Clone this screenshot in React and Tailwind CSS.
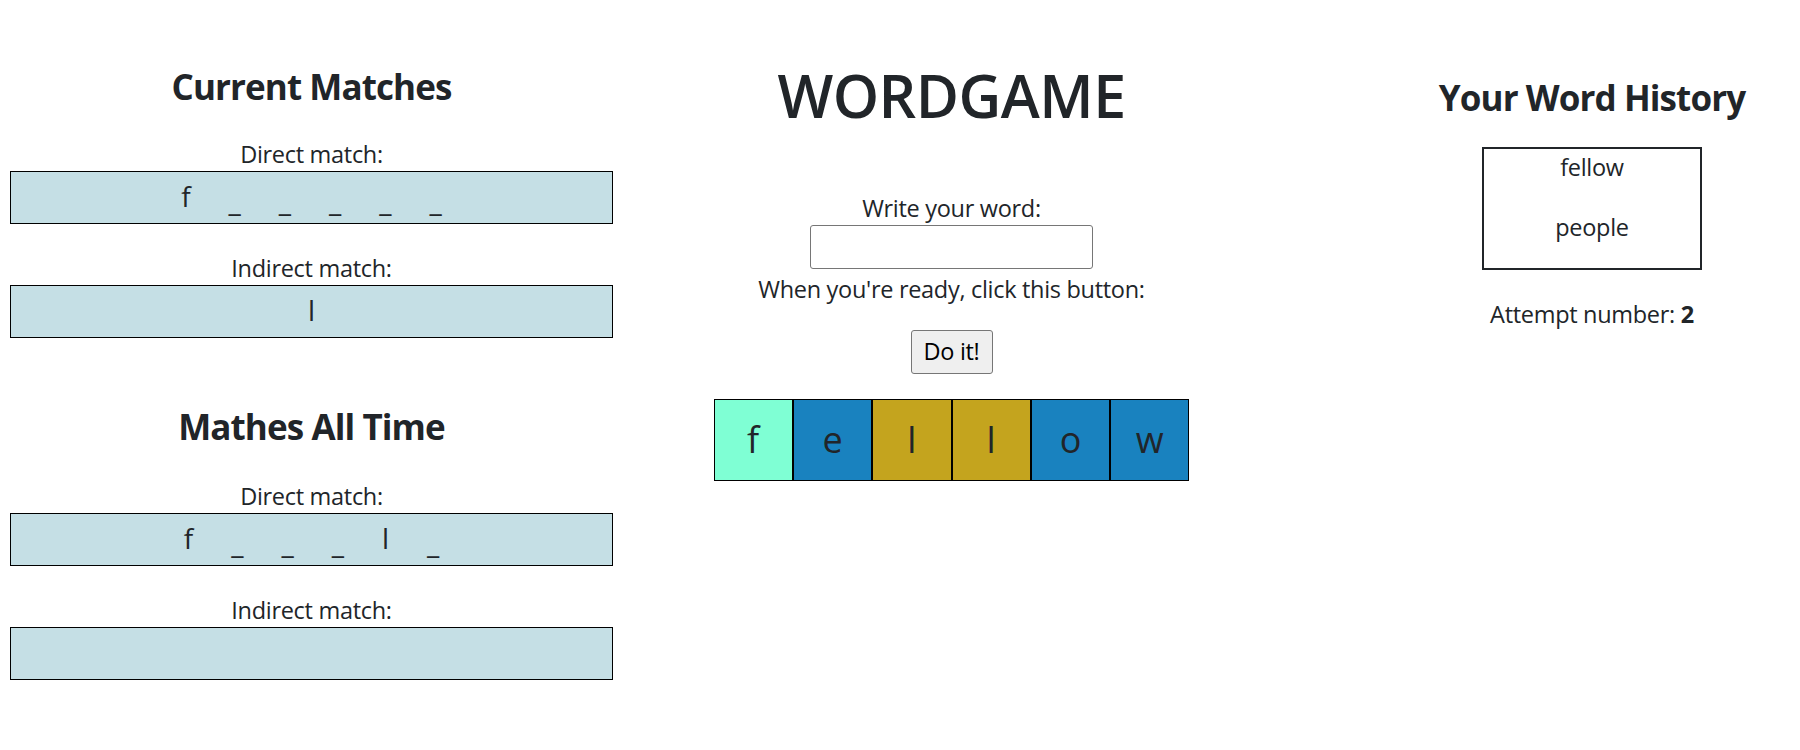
import React from "react";

const font = { fontFamily: '"Open Sans", "Noto Sans", sans-serif' };

function MatchBox({ chars }) {
  return (
    <div className="h-[53px] w-full border border-black bg-[#c5dfe5] flex items-center justify-center text-[28px] leading-none text-[#212529]">
      {chars.map((c, i) => (
        <span key={i} className={c === "_" ? "mx-[19px] relative top-[3px]" : "mx-[19px] relative top-[-2px]"}>
          {c}
        </span>
      ))}
    </div>
  );
}

function Label({ children, className = "" }) {
  return (
    <div className={"text-[23.5px] leading-[34px] tracking-[-0.3px] text-center text-[#212529] whitespace-nowrap " + className}>
      {children}
    </div>
  );
}

function Tile({ letter, color }) {
  return (
    <div className={"w-[79.33px] h-[82px] border border-black flex items-center justify-center text-[36px] text-[#212529] " + color}>
      {letter}
    </div>
  );
}

const h2 = "text-[35px] leading-[44px] font-bold tracking-[-0.9px] text-center whitespace-nowrap";

export default function App() {
  return (
    <div className="w-[1800px] h-[750px] bg-white flex text-[#212529]" style={font}>
      {/* Left column */}
      <div className="w-[623px] px-[10px] pt-[65px] flex flex-col">
        <h2 className={h2}>Current Matches</h2>
        <Label className="mt-[28px]">Direct match:</Label>
        <MatchBox chars={["f", "_", "_", "_", "_", "_"]} />
        <Label className="mt-[27px]">Indirect match:</Label>
        <MatchBox chars={["l"]} />
        <h2 className={"mt-[67px] " + h2}>Mathes All Time</h2>
        <Label className="mt-[30px]">Direct match:</Label>
        <MatchBox chars={["f", "_", "_", "_", "l", "_"]} />
        <Label className="mt-[27px]">Indirect match:</Label>
        <MatchBox chars={[]} />
      </div>

      {/* Middle column */}
      <div className="w-[657px] pt-[60px] flex flex-col items-center">
        <h1 className="text-[59px] leading-[70px] font-semibold tracking-[-0.5px]">WORDGAME</h1>
        <Label className="mt-[61px]">Write your word:</Label>
        <input
          type="text"
          className="w-[283px] h-[44px] border border-[#767676] rounded-[3px] bg-white outline-none px-2 text-[23px]"
        />
        <Label className="mt-[3px]">When you're ready, click this button:</Label>
        <button className="mt-[24px] w-[82px] h-[44px] bg-[#efefef] border border-[#767676] rounded-[3px] text-[23.5px] tracking-[-0.3px] text-black leading-none">
          Do it!
        </button>
        <div className="mt-[25px] flex">
          <Tile letter="f" color="bg-[#7fffd4]" />
          <Tile letter="e" color="bg-[#1982bf]" />
          <Tile letter="l" color="bg-[#c4a41e]" />
          <Tile letter="l" color="bg-[#c4a41e]" />
          <Tile letter="o" color="bg-[#1982bf]" />
          <Tile letter="w" color="bg-[#1982bf]" />
        </div>
      </div>

      {/* Right column */}
      <div className="w-[520px] pl-[104px] pt-[76px] flex flex-col items-center">
        <h2 className={h2}>Your Word History</h2>
        <div className="mt-[27px] w-[220px] h-[123px] border-2 border-[#212529] pt-[1px] flex flex-col items-center">
          <p className="text-[23.5px] leading-[34px] tracking-[-0.3px] mb-[26px]">fellow</p>
          <p className="text-[23.5px] leading-[34px] tracking-[-0.3px]">people</p>
        </div>
        <Label className="mt-[27px]">
          Attempt number: <b className="font-bold">2</b>
        </Label>
      </div>
    </div>
  );
}
